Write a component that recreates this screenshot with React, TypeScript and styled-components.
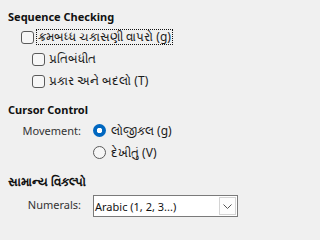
import React from "react";
import styled, { createGlobalStyle } from "styled-components";

const GlobalStyle = createGlobalStyle`
  html, body {
    margin: 0;
    padding: 0;
    background: #f0f0f0;
  }
  body {
    font-family: "Noto Sans", "Open Sans", sans-serif;
    font-size: 11px;
    color: #1a1a1a;
  }
`;

export default function App() {
  return (
    <>
      <GlobalStyle />
      <Page>
        <Heading>Sequence Checking</Heading>
        <CheckRow $indent={13}>
          <CheckBox />
          <CheckLabel $focused>ક્રમબધ્ધ ચકાસણી વાપરો (g)</CheckLabel>
        </CheckRow>
        <CheckRow $indent={24}>
          <CheckBox />
          <CheckLabel>પ્રતિબંધીત</CheckLabel>
        </CheckRow>
        <CheckRow $indent={24}>
          <CheckBox />
          <CheckLabel>પ્રકાર અને બદલો (T)</CheckLabel>
        </CheckRow>

        <Heading $gap={10}>Cursor Control</Heading>
        <FormGrid>
          <FieldLabel>Movement:</FieldLabel>
          <RadioRow>
            <Radio $checked />
            <Gujarati>લોજીકલ (g)</Gujarati>
          </RadioRow>
          <span />
          <RadioRow>
            <Radio />
            <Gujarati>દેખીતું (V)</Gujarati>
          </RadioRow>
        </FormGrid>

        <Heading $gap={11} $gujarati>સામાન્ય વિકલ્પો</Heading>
        <FormGrid>
          <FieldLabel>Numerals:</FieldLabel>
          <Select>
            <SelectValue>Arabic (1, 2, 3...)</SelectValue>
            <SelectButton>
              <svg width="9" height="5" viewBox="0 0 9 5">
                <path d="M0.5 0.5 L4.5 4.5 L8.5 0.5" fill="none" stroke="#555" strokeWidth="1" />
              </svg>
            </SelectButton>
          </Select>
        </FormGrid>
      </Page>
    </>
  );
}

// the dialog region is 247x227, the rest of the window stays empty
const Page = styled.div`
  box-sizing: border-box;
  width: 247px;
  height: 227px;
  display: flex;
  flex-direction: column;
  padding: 9px 0 0 8px;
  overflow: hidden;
`;

const Heading = styled.div<{ $gap?: number; $gujarati?: boolean }>`
  font-weight: 700;
  font-size: ${(p) => (p.$gujarati ? 12 : 11)}px;
  line-height: 16px;
  margin-top: ${(p) => p.$gap ?? 0}px;
  margin-bottom: 1px;
  color: #111;
`;

const CheckRow = styled.div<{ $indent: number }>`
  display: flex;
  align-items: center;
  height: 22px;
  padding-left: ${(p) => p.$indent}px;
`;

const CheckBox = styled.span`
  box-sizing: border-box;
  width: 13px;
  height: 13px;
  border: 1px solid #5a5a5a;
  border-radius: 3px;
  background: #f6f6f6;
  flex-shrink: 0;
`;

const CheckLabel = styled.span<{ $focused?: boolean }>`
  margin-left: 2px;
  padding: 0 1px;
  font-size: 12px;
  line-height: 14px;
  border: 1px dotted ${(p) => (p.$focused ? "#111" : "transparent")};
`;

const Gujarati = styled.span`
  font-size: 12px;
`;

const FormGrid = styled.div`
  display: grid;
  grid-template-columns: 73px 1fr;
  column-gap: 12px;
  align-items: center;
  padding-right: 9px;
`;

const FieldLabel = styled.span`
  text-align: right;
  color: #333;
`;

const RadioRow = styled.div`
  display: flex;
  align-items: center;
  gap: 5px;
  height: 22px;
`;

const Radio = styled.span<{ $checked?: boolean }>`
  box-sizing: border-box;
  width: 13px;
  height: 13px;
  border-radius: 50%;
  flex-shrink: 0;
  border: ${(p) => (p.$checked ? "none" : "1px solid #5a5a5a")};
  background: ${(p) =>
    p.$checked
      ? "radial-gradient(circle, #fff 0 2.5px, #0067c0 3px)"
      : "#f6f6f6"};
`;

const Select = styled.div`
  display: flex;
  align-items: stretch;
  height: 22px;
  box-sizing: border-box;
  border: 1px solid #7a7a7a;
  background: #fff;
  margin-top: 4px;
`;

const SelectValue = styled.span`
  flex: 1;
  display: flex;
  align-items: center;
  padding-left: 1px;
  color: #111;
`;

const SelectButton = styled.span`
  width: 15px;
  display: flex;
  align-items: center;
  justify-content: center;
  border: 1px solid #d4d4d4;
  margin: 1px;
  background: #fdfdfd;
`;
